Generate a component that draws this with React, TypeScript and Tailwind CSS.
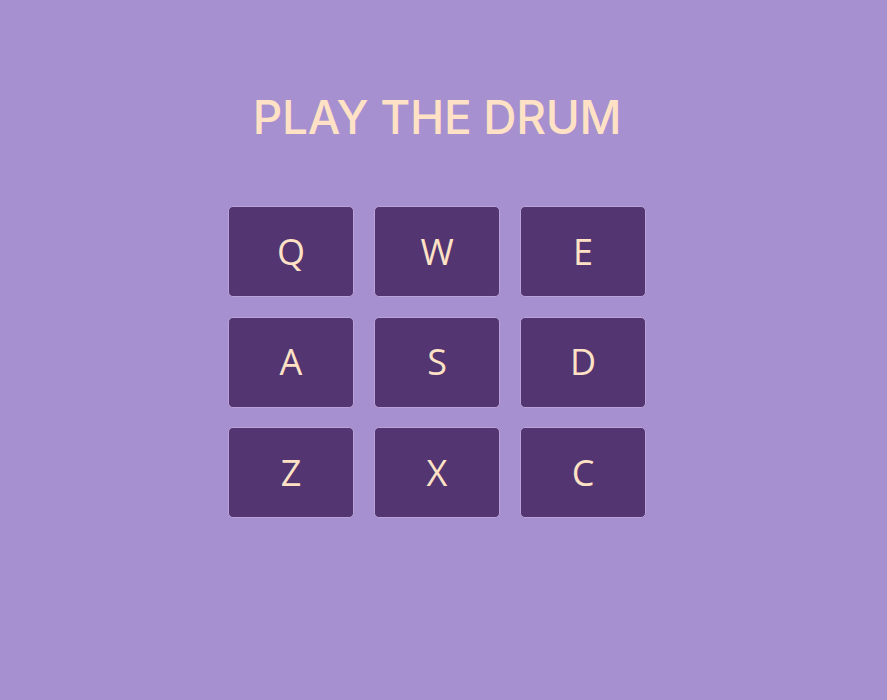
const keys = ["Q", "W", "E", "A", "S", "D", "Z", "X", "C"];

export default function App() {
  return (
    <div className="min-h-[700px] w-full bg-[#a690cf] flex flex-col items-center pr-[13px] pt-[89px]">
      <h1
        className="text-[46px] leading-[56px] font-medium text-[#ffe2c6] tracking-[-0.3px]"
        style={{ fontFamily: "Inter, 'Noto Sans', sans-serif" }}
      >
        PLAY THE DRUM
      </h1>
      <div className="mt-[61px] grid grid-cols-3 gap-x-[20px] gap-y-[19.5px]">
        {keys.map((k) => (
          <button
            key={k}
            className="w-[126px] h-[91px] rounded-[5px] bg-[#533571] border border-[#b9a3d8] flex items-center justify-center text-[36px] text-[#ffe2c6]"
            style={{ fontFamily: "'Open Sans', sans-serif" }}
          >
            {k}
          </button>
        ))}
      </div>
    </div>
  );
}
